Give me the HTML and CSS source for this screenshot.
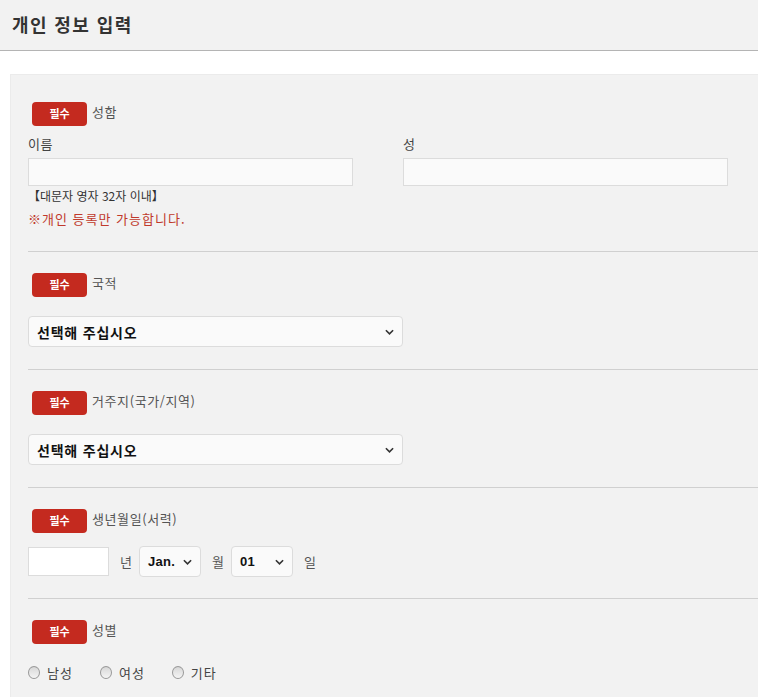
FILE: index.html
```html
<!DOCTYPE html>
<html lang="ko">
<head>
<meta charset="utf-8">
<title>개인 정보 입력</title>
<link rel="stylesheet" href="styles.css">
</head>
<body>
<header class="top">
  <h1 class="title">개인 정보 입력</h1>
</header>
<main class="card">
  <section class="sec">
    <div class="head"><span class="badge">필수</span><span class="lbl">성함</span></div>
    <div class="names">
      <div class="field">
        <label class="sub">이름</label>
        <input class="text" type="text">
      </div>
      <div class="field">
        <label class="sub">성</label>
        <input class="text" type="text">
      </div>
    </div>
    <p class="hint">【대문자 영자 32자 이내】</p>
    <p class="warn">※개인 등록만 가능합니다.</p>
  </section>
  <section class="sec">
    <div class="head"><span class="badge">필수</span><span class="lbl">국적</span></div>
    <div class="sel wide"><span>선택해 주십시오</span><svg class="chev" viewBox="0 0 10 6"><path d="M1 1l4 4 4-4" fill="none" stroke="#333" stroke-width="1.8"/></svg></div>
  </section>
  <section class="sec">
    <div class="head"><span class="badge">필수</span><span class="lbl">거주지(국가/지역)</span></div>
    <div class="sel wide"><span>선택해 주십시오</span><svg class="chev" viewBox="0 0 10 6"><path d="M1 1l4 4 4-4" fill="none" stroke="#333" stroke-width="1.8"/></svg></div>
  </section>
  <section class="sec date-sec">
    <div class="head"><span class="badge">필수</span><span class="lbl">생년월일(서력)</span></div>
    <div class="date">
      <input class="text year" type="text">
      <span class="unit">년</span>
      <div class="sel small"><span>Jan.</span><svg class="chev" viewBox="0 0 10 6"><path d="M1 1l4 4 4-4" fill="none" stroke="#333" stroke-width="1.8"/></svg></div>
      <span class="unit">월</span>
      <div class="sel small"><span>01</span><svg class="chev" viewBox="0 0 10 6"><path d="M1 1l4 4 4-4" fill="none" stroke="#333" stroke-width="1.8"/></svg></div>
      <span class="unit">일</span>
    </div>
  </section>
  <section class="sec last">
    <div class="head"><span class="badge">필수</span><span class="lbl">성별</span></div>
    <div class="radios">
      <label class="radio"><span class="dot"></span>남성</label>
      <label class="radio"><span class="dot"></span>여성</label>
      <label class="radio"><span class="dot"></span>기타</label>
    </div>
  </section>
</main>
</body>
</html>
```
FILE: styles.css
```css
html, body {
  margin: 0;
  padding: 0;
  background: #fff;
  overflow: hidden;
}
body {
  font-family: "Noto Sans CJK KR", "Noto Sans", sans-serif;
  color: #333;
  font-size: 13px;
  width: 758px;
}
.top {
  height: 50px;
  background: #f2f2f2;
  border-bottom: 1px solid #b4b4b4;
  display: flex;
  align-items: center;
  padding-left: 12px;
}
.title {
  margin: 0;
  font-size: 18px;
  font-weight: bold;
  color: #333;
  letter-spacing: 1.4px;
  line-height: 1;
  padding-bottom: 3px;
}
.card {
  margin: 23px 0 0 10px;
  width: 780px;
  background: #f2f2f2;
  border-top: 1px solid #ebebeb;
  border-left: 1px solid #ebebeb;
  padding: 0 0 0 17px;
  box-sizing: border-box;
}
.sec {
  padding: 21px 0 22px 0;
  border-bottom: 1px solid #d0d0d0;
}
.sec:first-child {
  padding-top: 27px;
  padding-bottom: 23px;
}
.sec.date-sec {
  padding-bottom: 21px;
}
.sec.last {
  border-bottom: none;
}
.head {
  display: flex;
  align-items: center;
  height: 24px;
  padding-left: 4px;
}
.badge {
  width: 55px;
  height: 24px;
  background: #c42a1f;
  border-radius: 4px;
  color: #fff;
  font-size: 11px;
  font-weight: bold;
  display: flex;
  align-items: center;
  justify-content: center;
  padding-bottom: 2px;
  box-sizing: border-box;
}
.lbl {
  margin-left: 5px;
  font-size: 13px;
  color: #555;
  padding-bottom: 6px;
  letter-spacing: 0.6px;
}
.names {
  display: flex;
  gap: 50px;
  margin-top: 9px;
}
.field {
  display: flex;
  flex-direction: column;
}
.sub {
  font-size: 13px;
  color: #444;
  line-height: 18px;
  margin-bottom: 5px;
  letter-spacing: 0.5px;
}
.text {
  width: 325px;
  height: 28px;
  border: 1px solid #dcdcdc;
  background: #fafafa;
  box-sizing: border-box;
  margin: 0;
  padding: 0 6px;
}
.hint {
  margin: 1px 0 0 0;
  font-size: 12px;
  color: #333;
  line-height: 18px;
}
.warn {
  margin: 5px 0 0 0;
  font-size: 13px;
  color: #c0392b;
  line-height: 18px;
  letter-spacing: 1px;
}
.sel {
  display: flex;
  align-items: center;
  justify-content: space-between;
  height: 31px;
  border: 1px solid #dcdcdc;
  border-radius: 4px;
  background: #fafafa;
  box-sizing: border-box;
  padding: 0 8px 0 8px;
  font-weight: bold;
  font-size: 14px;
  letter-spacing: 0.8px;
  color: #111;
  font-family: "Noto Sans CJK KR", "Liberation Sans", sans-serif;
}
.wide {
  width: 375px;
  margin-top: 19px;
}
.chev {
  width: 9px;
  height: 6px;
}
.date {
  display: flex;
  align-items: center;
  margin-top: 13px;
}
.year {
  width: 81px;
  height: 29px;
  background: #fff;
}
.unit {
  font-size: 13px;
  color: #555;
  margin: 0 7px 0 11px;
}
.small {
  width: 62px;
  height: 31px;
  font-family: "Liberation Sans", sans-serif;
  font-size: 13px;
  letter-spacing: 0.3px;
}
.radios {
  display: flex;
  gap: 27px;
  margin-top: 19px;
}
.radio {
  display: flex;
  align-items: center;
  color: #444;
  font-size: 13px;
  letter-spacing: 1px;
}
.dot {
  width: 10px;
  height: 11px;
  border: 1px solid #999;
  border-radius: 50%;
  background: linear-gradient(#d8d8d8, #f4f4f4);
  margin-right: 7px;
}
```
